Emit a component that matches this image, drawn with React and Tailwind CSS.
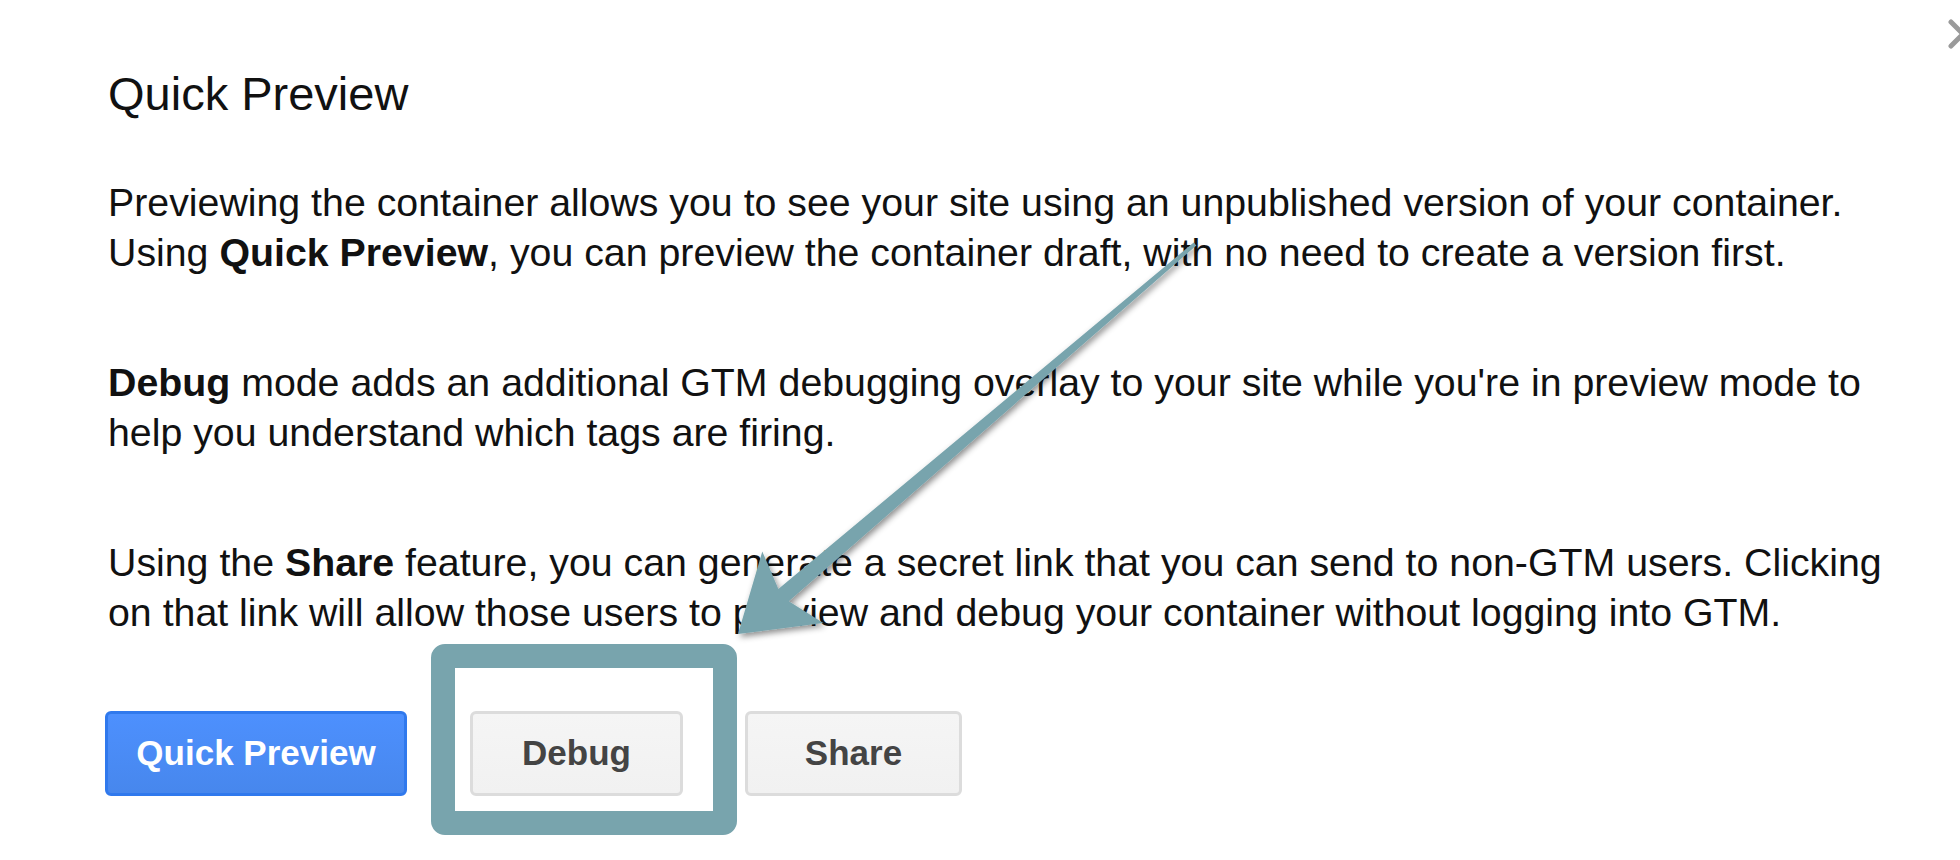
import React from "react";

const font = { fontFamily: '"Liberation Sans", Arial, Helvetica, sans-serif' };

/** arrow geometry (page coordinates): tip, barb, neck, tail, tail, neck, barb */
const ARROW_POINTS =
  "738,634 823.3,623.1 788.8,601.2 1196.3,245.5 1193.7,242.5 778.4,589 762.3,551.5";

const Paragraph = ({ children, className = "" }) => (
  <p className={`text-[39.3px] leading-[50px] text-[#111] whitespace-nowrap ${className}`}>
    {children}
  </p>
);

const App = () => {
  return (
    <div
      className="relative w-[1960px] h-[860px] overflow-hidden bg-white"
      style={font}
    >
      <div className="pl-[108px] pt-[66px]">
        <h2 className="text-[47px] leading-[56px] font-normal text-[#111]">
          Quick Preview
        </h2>

        <Paragraph className="mt-[55px]">
          Previewing the container allows you to see your site using an unpublished version of your container.
          <br />
          Using <b>Quick Preview</b>, you can preview the container draft, with no need to create a version first.
        </Paragraph>

        <Paragraph className="mt-[80px]">
          <b>Debug</b> mode adds an additional GTM debugging overlay to your site while you're in preview mode to
          <br />
          help you understand which tags are firing.
        </Paragraph>

        <Paragraph className="mt-[80px]">
          Using the <b>Share</b> feature, you can generate a secret link that you can send to non-GTM users. Clicking
          <br />
          on that link will allow those users to preview and debug your container without logging into GTM.
        </Paragraph>

        <div className="flex items-center mt-[74px] -ml-[3px]">
          <button
            type="button"
            className="flex items-center justify-center w-[302px] h-[85px] rounded-[6px] border-[3px] border-[#3079ed] bg-gradient-to-b from-[#4d90fe] to-[#4787ed] text-white text-[35px] font-bold"
          >
            Quick Preview
          </button>
          <button
            type="button"
            className="flex items-center justify-center ml-[63px] w-[213px] h-[85px] rounded-[6px] border-[3px] border-[#dcdcdc] bg-gradient-to-b from-[#f5f5f5] to-[#f1f1f1] text-[#444] text-[35px] font-bold"
          >
            Debug
          </button>
          <button
            type="button"
            className="flex items-center justify-center ml-[62px] w-[217px] h-[85px] rounded-[6px] border-[3px] border-[#dcdcdc] bg-gradient-to-b from-[#f5f5f5] to-[#f1f1f1] text-[#444] text-[35px] font-bold"
          >
            Share
          </button>
        </div>
      </div>

      {/* close button, half cut off by the edge */}
      <svg
        className="absolute left-[1945px] top-[16px] w-[36px] h-[36px]"
        viewBox="0 0 36 36"
        fill="none"
        stroke="#9a9a9a"
        strokeWidth="5"
        strokeLinecap="round"
      >
        <path d="M6 6l24 24M30 6L6 30" />
      </svg>

      {/* highlight box around Debug */}
      <div className="absolute left-[431px] top-[644px] w-[306px] h-[191px] rounded-[14px] border-[24px] border-[#78a4ad]" />

      {/* annotation arrow */}
      <svg
        className="absolute inset-0 pointer-events-none"
        width="1960"
        height="860"
        viewBox="0 0 1960 860"
      >
        <defs>
          <filter id="arrowShadow" x="-10%" y="-10%" width="120%" height="120%">
            <feDropShadow dx="2" dy="3" stdDeviation="3" floodColor="#000" floodOpacity="0.45" />
          </filter>
        </defs>
        <polygon points={ARROW_POINTS} fill="#78a4ad" filter="url(#arrowShadow)" />
      </svg>
    </div>
  );
};

export default App;
